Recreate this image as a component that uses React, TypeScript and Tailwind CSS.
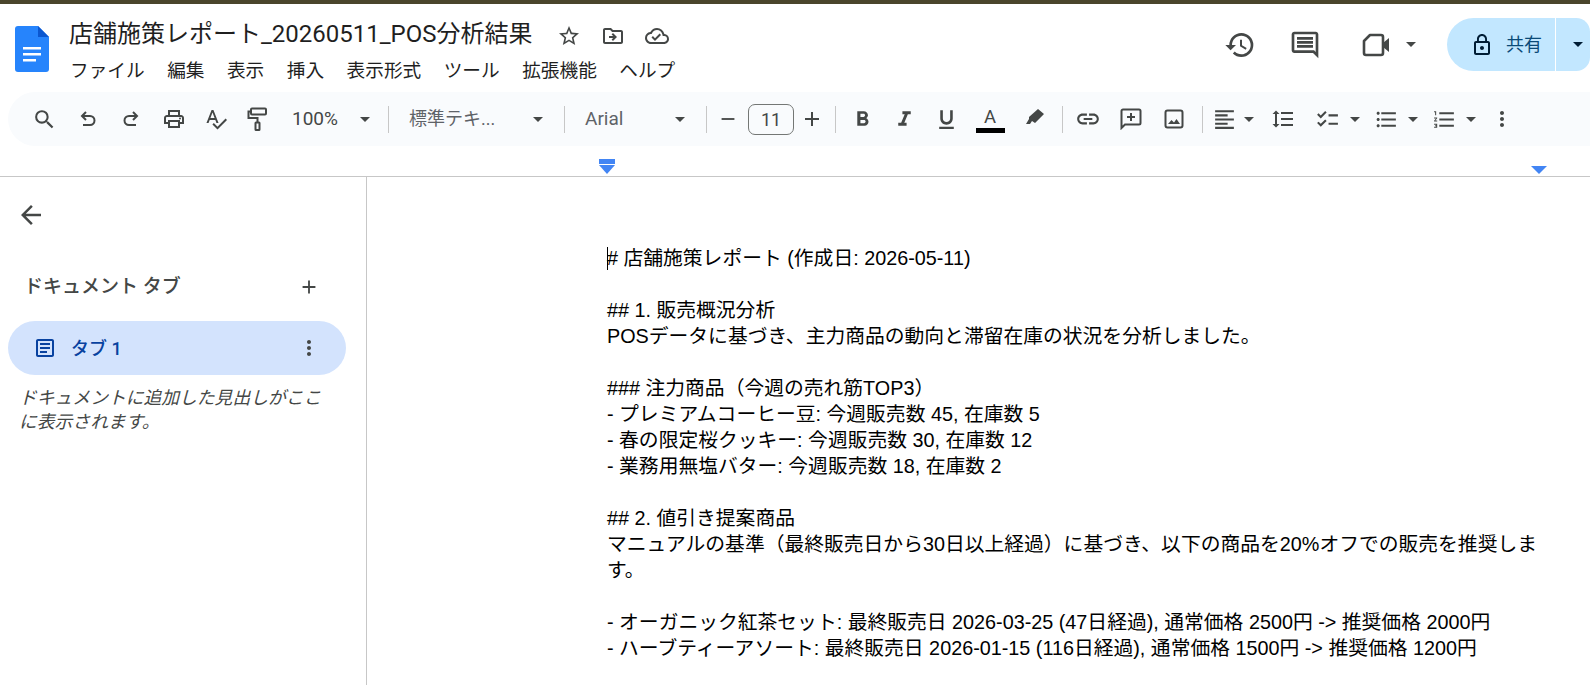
import React from "react";
import {
  MdAdd,
  MdArrowBack,
  MdChecklist,
  MdFormatAlignLeft,
  MdFormatBold,
  MdFormatItalic,
  MdFormatLineSpacing,
  MdFormatListBulleted,
  MdFormatListNumbered,
  MdFormatUnderlined,
  MdHistory,
  MdLink,
  MdLockOutline,
  MdMoreVert,
  MdOutlineArticle,
  MdOutlineCloudDone,
  MdOutlineComment,
  MdOutlineDriveFileMove,
  MdOutlinePrint,
  MdRemove,
  MdSearch,
  MdSpellcheck,
  MdStarOutline,
} from "react-icons/md";

const docLines = [
  "# 店舗施策レポート (作成日: 2026-05-11)",
  "",
  "## 1. 販売概況分析",
  "POSデータに基づき、主力商品の動向と滞留在庫の状況を分析しました。",
  "",
  "### 注力商品（今週の売れ筋TOP3）",
  "- プレミアムコーヒー豆: 今週販売数 45, 在庫数 5",
  "- 春の限定桜クッキー: 今週販売数 30, 在庫数 12",
  "- 業務用無塩バター: 今週販売数 18, 在庫数 2",
  "",
  "## 2. 値引き提案商品",
  "マニュアルの基準（最終販売日から30日以上経過）に基づき、以下の商品を20%オフでの販売を推奨します。",
  "",
  "- オーガニック紅茶セット: 最終販売日 2026-03-25 (47日経過), 通常価格 2500円 -> 推奨価格 2000円",
  "- ハーブティーアソート: 最終販売日 2026-01-15 (116日経過), 通常価格 1500円 -> 推奨価格 1200円",
];

const menus = ["ファイル", "編集", "表示", "挿入", "表示形式", "ツール", "拡張機能", "ヘルプ"];

const Caret = ({ className = "border-t-[#444746]" }: { className?: string }) => (
  <span className={`block w-0 h-0 border-x-[5px] border-x-transparent border-t-[5px] ${className}`} />
);

const Sep = () => <span className="w-px h-[27px] bg-[#c7c7c7] shrink-0" />;

const Tool = ({ w, children }: { w: string; children: React.ReactNode }) => (
  <span className={`flex items-center justify-center shrink-0 ${w}`}>{children}</span>
);

const UndoIcon = () => (
  <svg width="18" height="18" viewBox="0 0 18 18" fill="none" stroke="currentColor" strokeWidth="2">
    <path d="M7 2L3 6l4 4M3 6h8a4.5 4.5 0 0 1 0 9H4" />
  </svg>
);

const RedoIcon = () => (
  <svg width="18" height="18" viewBox="0 0 18 18" fill="none" stroke="currentColor" strokeWidth="2">
    <path d="M11 2l4 4-4 4M15 6H7a4.5 4.5 0 0 0 0 9h7" />
  </svg>
);

const RollerIcon = () => (
  <svg width="20" height="24" viewBox="0 0 20 24" fill="none" stroke="currentColor" strokeWidth="2">
    <rect x="4" y="1.5" width="15" height="6" rx="1" />
    <path d="M4 4.5H1.5v6.5h9v4" />
    <rect x="8.5" y="15.5" width="4" height="7.5" rx="0.5" />
  </svg>
);

const Toolbar = () => (
  <div className="h-[54px] ml-2 pl-[15px] flex items-center bg-[#f9fbfd] rounded-l-[27px] text-[#444746]">
    <Tool w="w-[43px]"><MdSearch size={25} /></Tool>
    <Tool w="w-[44px]"><UndoIcon /></Tool>
    <Tool w="w-[42px]"><RedoIcon /></Tool>
    <Tool w="w-[43px]"><MdOutlinePrint size={24} /></Tool>
    <Tool w="w-[41px]"><MdSpellcheck size={24} /></Tool>
    <Tool w="w-[42px]"><RollerIcon /></Tool>
    <div className="w-[110px] flex items-center pl-[14px] shrink-0">
      <span className="text-[19px] leading-[24px] -mt-px w-[68px]">100%</span>
      <Caret />
    </div>
    <Sep />
    <div className="w-[175px] flex items-center pl-[20px] shrink-0 text-[#5f6368]">
      <span className="text-[18px] -mt-px w-[124px] whitespace-nowrap">標準テキ...</span>
      <Caret />
    </div>
    <Sep />
    <div className="w-[141px] flex items-center pl-[20px] shrink-0 text-[#5f6368]">
      <span className="text-[19px] leading-[24px] -mt-px w-[90px]">Arial</span>
      <Caret />
    </div>
    <Sep />
    <Tool w="w-[41px]"><MdRemove size={22} /></Tool>
    <span className="w-[46px] h-[31px] flex items-center justify-center border border-[#747775] rounded-[7px] text-[18px] shrink-0">11</span>
    <Tool w="w-[36px] mr-[5px]"><MdAdd size={24} /></Tool>
    <Sep />
    <Tool w="w-[42px] ml-[5px]"><MdFormatBold size={25} /></Tool>
    <Tool w="w-[42px]"><MdFormatItalic size={25} /></Tool>
    <Tool w="w-[42px]"><MdFormatUnderlined size={25} /></Tool>
    <Tool w="w-[46px]">
      <span className="flex flex-col items-center w-[29px]">
        <span className="text-[18.5px] leading-[22px]">A</span>
        <span className="block w-[29px] h-[5px] bg-black" />
      </span>
    </Tool>
    <Tool w="w-[44px] mr-[5px]">
      <svg width="18" height="16" viewBox="0 0 18 16" fill="currentColor" className="-mt-[4px]">
        <path d="M12 0l6 5-9 9-3-2-2 3H0l3-5V8z" />
      </svg>
    </Tool>
    <Sep />
    <Tool w="w-[42px] ml-1"><MdLink size={26} /></Tool>
    <Tool w="w-[44px]">
      <svg width="22" height="22" viewBox="0 0 22 22" fill="none" stroke="currentColor" strokeWidth="2">
        <path d="M1.5 20V3a1.5 1.5 0 0 1 1.5-1.5h16A1.5 1.5 0 0 1 20.5 3v12a1.5 1.5 0 0 1-1.5 1.5H5z" />
        <path d="M11 5v8M7 9h8" />
      </svg>
    </Tool>
    <Tool w="w-[42px] mr-[7px]">
      <svg width="20" height="20" viewBox="0 0 20 20" fill="none" stroke="currentColor" strokeWidth="2">
        <rect x="1.5" y="1.5" width="17" height="17" rx="2" />
        <path d="M4 15l3.5-4 2.5 2.5L12.5 10l3.5 5z" fill="currentColor" stroke="none" />
      </svg>
    </Tool>
    <Sep />
    <Tool w="w-[42px]"><MdFormatAlignLeft size={25} /></Tool>
    <Tool w="w-2"><Caret /></Tool>
    <Tool w="w-[60px]"><MdFormatLineSpacing size={24} /></Tool>
    <Tool w="w-[28px]"><MdChecklist size={25} /></Tool>
    <Tool w="w-[28px]"><Caret /></Tool>
    <Tool w="w-[34px]"><MdFormatListBulleted size={25} /></Tool>
    <Tool w="w-[20px]"><Caret /></Tool>
    <Tool w="w-[42px]"><MdFormatListNumbered size={25} /></Tool>
    <Tool w="w-[12px]"><Caret /></Tool>
    <Tool w="w-[50px]"><MdMoreVert size={24} /></Tool>
  </div>
);

const Header = () => (
  <header className="h-[88px] flex shrink-0">
    {/* logo */}
    <div className="pl-[15px] pt-[22px] w-[69px] shrink-0">
      <svg width="34" height="46" viewBox="0 0 34 46">
        <path d="M3 0h20l11 11v32a3 3 0 0 1-3 3H3a3 3 0 0 1-3-3V3a3 3 0 0 1 3-3z" fill="#2684fc" />
        <path d="M23 0l11 11H23z" fill="#0b57d0" />
        <path d="M8 21h18v2.5H8zM8 27h18v2.5H8zM8 33h13v2.5H8z" fill="#fff" />
      </svg>
    </div>
    <div className="flex flex-col">
      <div className="flex items-center h-[36px] mt-[12px] text-[#1f1f1f]">
        <h1 className="text-[24px] leading-[36px] whitespace-nowrap w-[488px]">店舗施策レポート_20260511_POS分析結果</h1>
        <div className="flex items-center gap-[20px] text-[#444746] mt-[4px]">
          <MdStarOutline size={24} />
          <MdOutlineDriveFileMove size={24} />
          <MdOutlineCloudDone size={24} />
        </div>
      </div>
      <nav className="flex gap-[22.5px] mt-[5px] pl-[1px] text-[18.67px] leading-[28px] text-[#1f1f1f]">
        {menus.map((m) => (
          <span key={m} className="whitespace-nowrap">{m}</span>
        ))}
      </nav>
    </div>
    <div className="ml-auto flex items-center h-[53px] mt-[14px] text-[#444746]">
      <MdHistory size={32} className="mr-[33px]" />
      <MdOutlineComment size={32} className="mr-[41px]" />
      <svg width="28" height="24" viewBox="0 0 28 24" fill="none" stroke="currentColor" strokeWidth="2.6" className="mr-[16px]">
        <path d="M8 2h11a2 2 0 0 1 2 2v16a2 2 0 0 1-2 2H4a2 2 0 0 1-2-2V8z" strokeLinejoin="round" />
        <path d="M21 10l6-5v14l-6-5z" fill="currentColor" stroke="none" />
      </svg>
      <Caret className="mr-[31px] border-t-[#444746]" />
      <div className="w-[143px] h-[53px] flex items-center bg-[#c2e7ff] rounded-l-[27px] rounded-r-[14px]">
        <MdLockOutline size={24} className="ml-[23px] text-[#001d35]" />
        <span className="ml-[12px] text-[18px] text-[#0a4a78] whitespace-nowrap">共有</span>
        <span className="ml-[13px] w-px h-full bg-white" />
        <span className="ml-[17px]"><Caret className="border-t-[#001d35]" /></span>
      </div>
    </div>
  </header>
);

const Sidebar = () => (
  <aside className="w-[367px] h-full shrink-0 border-r border-[#c7c7c7] pl-2 text-[#444746]">
    <MdArrowBack size={30} className="ml-2 mt-[23px]" />
    <div className="flex items-center h-[30px] mt-[42px] pl-4">
      <span className="text-[19px] font-medium whitespace-nowrap w-[274px]">ドキュメント タブ</span>
      <MdAdd size={22} />
    </div>
    <div className="w-[338px] h-[54px] mt-[19px] flex items-center rounded-full bg-[#d3e3fd] text-[#0842a0]">
      <MdOutlineArticle size={24} className="ml-[25px]" />
      <span className="ml-[14px] text-[18px] font-medium whitespace-nowrap w-[226px]">タブ 1</span>
      <MdMoreVert size={24} className="text-[#444746]" />
    </div>
    <p className="mt-[11px] ml-[11px] w-[310px] text-[17.8px] leading-[23.5px] italic">
      ドキュメントに追加した見出しがここに表示されます。
    </p>
  </aside>
);

const DocBody = () => (
  <main className="flex-1 pl-[240px] pt-[68px] overflow-hidden">
    <div className="relative w-[935px] font-['Liberation_Sans','Noto_Sans_CJK_JP',sans-serif] text-[19.8px] leading-[26px] text-black">
      <span className="absolute left-0 top-[2px] w-px h-[23px] bg-black" />
      {docLines.map((line, i) => (
        <p key={i} className="min-h-[26px]">{line}</p>
      ))}
    </div>
  </main>
);

export default function App() {
  return (
    <div className="w-[1590px] h-[685px] overflow-hidden flex flex-col bg-white font-['Roboto','Noto_Sans_CJK_JP',sans-serif]">
      <div className="h-1 shrink-0 bg-[#4a452c]" />
      <Header />
      <Toolbar />
      {/* ruler */}
      <div className="h-[31px] shrink-0 flex items-end pb-[2px] pl-[599px] border-b border-[#c7c7c7]">
        <div className="flex flex-col items-center gap-px w-4">
          <span className="w-4 h-[5px] bg-[#4285f4]" />
          <span className="w-0 h-0 border-x-[8px] border-x-transparent border-t-[9px] border-t-[#4285f4]" />
        </div>
        <span className="ml-[916px] w-0 h-0 border-x-[8px] border-x-transparent border-t-[8px] border-t-[#4285f4]" />
      </div>
      <div className="flex flex-1 min-h-0">
        <Sidebar />
        <DocBody />
      </div>
    </div>
  );
}
